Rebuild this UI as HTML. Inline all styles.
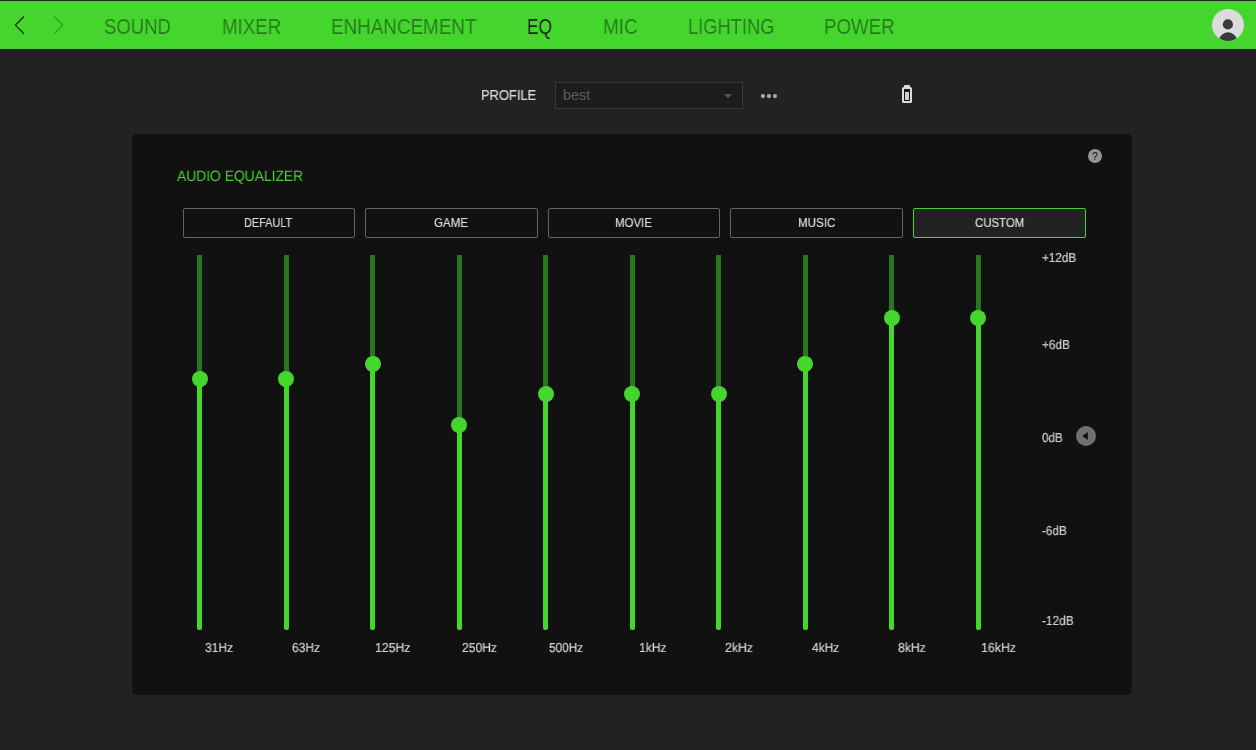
<!DOCTYPE html>
<html lang="en">
<head>
<meta charset="utf-8">
<title>Audio Equalizer</title>
<style>
html,body{margin:0;padding:0;}
body{width:1256px;height:750px;overflow:hidden;background:#222;position:relative;font-family:"Liberation Sans",sans-serif;}
.abs,.t,.trk,.fill,.thumb,.btn{position:absolute;}
.t{white-space:nowrap;line-height:1;transform-origin:0 84.65%;display:block;will-change:transform;}
#topline{left:0;top:0;width:1256px;height:1px;background:#222;}
#nav{left:0;top:1px;width:1256px;height:48px;background:#44d62c;}
#panel{left:132px;top:134px;width:1000px;height:561px;background:#111;border-radius:5px;}
.trk{top:255px;width:5px;height:375px;background:#2b7420;border-radius:0 0 2.5px 2.5px;}
.fill{width:5px;background:#44d62c;border-radius:0 0 2.5px 2.5px;}
.thumb{width:16px;height:16px;border-radius:50%;background:#44d62c;}
.btn{top:208px;width:172.5px;height:30px;box-sizing:border-box;border:1px solid #636363;border-radius:2px;background:#111;}
.btn.on{border-color:#44d62c;background:#222;}
#help{left:1088px;top:149px;width:14px;height:14px;border-radius:50%;background:#969696;color:#222;font-size:10px;line-height:16px;text-align:center;will-change:transform;overflow:hidden;-webkit-text-stroke:0.2px;}
#sel{left:555px;top:82px;width:188px;height:27px;box-sizing:border-box;border:1px solid #383838;background:#1c1c1c;}
</style>
</head>
<body>
<div class="abs" id="topline"></div>
<div class="abs" id="nav"></div>
<svg class="abs" style="left:0;top:0" width="90" height="50" viewBox="0 0 90 50">
  <polyline points="24,16.5 15.4,25.1 24,33.7" fill="none" stroke="#1f2a1c" stroke-width="1.25"/>
  <polyline points="54.1,16.5 62.7,25.1 54.1,33.7" fill="none" stroke="#2f9a22" stroke-width="1.1"/>
</svg>
<svg class="abs" style="left:1212px;top:9px" width="32" height="32" viewBox="0 0 32 32">
  <defs><clipPath id="avc"><circle cx="16" cy="16" r="16"/></clipPath></defs>
  <circle cx="16" cy="16" r="16" fill="#dcdcdc"/>
  <circle cx="15.9" cy="15.4" r="5.1" fill="#3a3a3a"/>
  <ellipse cx="16" cy="32.3" rx="9.2" ry="9" fill="#3a3a3a" clip-path="url(#avc)"/>
</svg>
<div class="abs" id="sel"></div>
<svg class="abs" style="left:720px;top:90px" width="16" height="12" viewBox="0 0 16 12">
  <polygon points="4,4 12,4 8,8.2" fill="#555"/>
</svg>
<svg class="abs" style="left:758px;top:90px" width="22" height="12" viewBox="0 0 22 12">
  <circle cx="4.9" cy="6.1" r="2.1" fill="#aaa"/><circle cx="10.9" cy="6.1" r="2.1" fill="#aaa"/><circle cx="17" cy="6.1" r="2.1" fill="#aaa"/>
</svg>
<svg class="abs" style="left:900px;top:83px" width="14" height="22" viewBox="0 0 14 22">
  <rect x="4" y="2" width="6" height="3" rx="0.8" fill="#dcdcdc"/>
  <rect x="3" y="5" width="8" height="14" rx="0.6" fill="#151515" stroke="#dcdcdc" stroke-width="2"/>
  <rect x="5" y="9" width="4" height="8" fill="#cfcfcf"/>
</svg>
<div class="abs" id="panel"></div>
<div class="abs" id="help">?</div>
<div class="btn" style="left:183px;width:172px"></div>
<div class="btn" style="left:365px;width:173px"></div>
<div class="btn" style="left:548px;width:172px"></div>
<div class="btn" style="left:730px;width:173px"></div>
<div class="btn on" style="left:913px;width:173px"></div>
<div class="trk" style="left:197px"></div>
<div class="fill" style="left:197px;top:379px;height:251px"></div>
<div class="thumb" style="left:192px;top:371px"></div>
<div class="trk" style="left:284px"></div>
<div class="fill" style="left:284px;top:379px;height:251px"></div>
<div class="thumb" style="left:278px;top:371px"></div>
<div class="trk" style="left:370px"></div>
<div class="fill" style="left:370px;top:364px;height:266px"></div>
<div class="thumb" style="left:365px;top:356px"></div>
<div class="trk" style="left:457px"></div>
<div class="fill" style="left:457px;top:425px;height:205px"></div>
<div class="thumb" style="left:451px;top:417px"></div>
<div class="trk" style="left:543px"></div>
<div class="fill" style="left:543px;top:394px;height:236px"></div>
<div class="thumb" style="left:538px;top:386px"></div>
<div class="trk" style="left:630px"></div>
<div class="fill" style="left:630px;top:394px;height:236px"></div>
<div class="thumb" style="left:624px;top:386px"></div>
<div class="trk" style="left:716px"></div>
<div class="fill" style="left:716px;top:394px;height:236px"></div>
<div class="thumb" style="left:711px;top:386px"></div>
<div class="trk" style="left:803px"></div>
<div class="fill" style="left:803px;top:364px;height:266px"></div>
<div class="thumb" style="left:797px;top:356px"></div>
<div class="trk" style="left:889px"></div>
<div class="fill" style="left:889px;top:318px;height:312px"></div>
<div class="thumb" style="left:884px;top:310px"></div>
<div class="trk" style="left:976px"></div>
<div class="fill" style="left:976px;top:318px;height:312px"></div>
<div class="thumb" style="left:970px;top:310px"></div>
<svg class="abs" style="left:1076px;top:426px" width="20" height="20" viewBox="0 0 20 20">
  <circle cx="10" cy="10" r="10" fill="#707070"/>
  <polygon points="6.2,10 11.8,6 11.8,14" fill="#111"/>
</svg>
<span class="t" style="left:103.73px;top:16.38px;font-size:22px;color:#2b7a20;transform:scale(0.8417,1);">SOUND</span>
<span class="t" style="left:221.87px;top:16.38px;font-size:22px;color:#2b7a20;transform:scale(0.8496,1);">MIXER</span>
<span class="t" style="left:331.44px;top:16.38px;font-size:22px;color:#2b7a20;transform:scale(0.8562,1);">ENHANCEMENT</span>
<span class="t" style="left:527.17px;top:16.38px;font-size:22px;color:#222;transform:scale(0.7842,1);">EQ</span>
<span class="t" style="left:603.25px;top:16.38px;font-size:22px;color:#2b7a20;transform:scale(0.8604,1);">MIC</span>
<span class="t" style="left:688.05px;top:16.38px;font-size:22px;color:#2b7a20;transform:scale(0.8315,1);">LIGHTING</span>
<span class="t" style="left:824.04px;top:16.38px;font-size:22px;color:#2b7a20;transform:scale(0.8502,1);">POWER</span>
<span class="t" style="left:481.48px;top:88.35px;font-size:14px;color:#dadada;transform:scale(0.9210,1);-webkit-text-stroke:0.2px;">PROFILE</span>
<span class="t" style="left:562.54px;top:88.35px;font-size:14px;color:#585858;transform:scale(1.0344,1);-webkit-text-stroke:0.2px;">best</span>
<span class="t" style="left:176.97px;top:169.30px;font-size:15px;color:#44d62c;transform:scale(0.9230,1);text-rendering:geometricPrecision;">AUDIO EQUALIZER</span>
<span class="t" style="left:205.20px;top:641.20px;font-size:13px;color:#d2d2d2;transform:scale(0.9272,1);text-rendering:geometricPrecision;-webkit-text-stroke:0.2px;">31Hz</span>
<span class="t" style="left:292.16px;top:641.20px;font-size:13px;color:#d2d2d2;transform:scale(0.9252,1);text-rendering:geometricPrecision;-webkit-text-stroke:0.2px;">63Hz</span>
<span class="t" style="left:375.23px;top:641.20px;font-size:13px;color:#d2d2d2;transform:scale(0.9422,1);text-rendering:geometricPrecision;-webkit-text-stroke:0.2px;">125Hz</span>
<span class="t" style="left:462.06px;top:641.20px;font-size:13px;color:#d2d2d2;transform:scale(0.9305,1);text-rendering:geometricPrecision;-webkit-text-stroke:0.2px;">250Hz</span>
<span class="t" style="left:548.85px;top:641.20px;font-size:13px;color:#d2d2d2;transform:scale(0.9074,1);text-rendering:geometricPrecision;-webkit-text-stroke:0.2px;">500Hz</span>
<span class="t" style="left:638.54px;top:641.20px;font-size:13px;color:#d2d2d2;transform:scale(0.9318,1);text-rendering:geometricPrecision;-webkit-text-stroke:0.2px;">1kHz</span>
<span class="t" style="left:725.18px;top:641.20px;font-size:13px;color:#d2d2d2;transform:scale(0.9470,1);text-rendering:geometricPrecision;-webkit-text-stroke:0.2px;">2kHz</span>
<span class="t" style="left:811.82px;top:641.20px;font-size:13px;color:#d2d2d2;transform:scale(0.9197,1);text-rendering:geometricPrecision;-webkit-text-stroke:0.2px;">4kHz</span>
<span class="t" style="left:898.30px;top:641.20px;font-size:13px;color:#d2d2d2;transform:scale(0.9393,1);text-rendering:geometricPrecision;-webkit-text-stroke:0.2px;">8kHz</span>
<span class="t" style="left:980.72px;top:641.20px;font-size:13px;color:#d2d2d2;transform:scale(0.9496,1);text-rendering:geometricPrecision;-webkit-text-stroke:0.2px;">16kHz</span>
<span class="t" style="left:1042.00px;top:251.00px;font-size:13px;color:#d2d2d2;transform:scale(0.9011,1);text-rendering:geometricPrecision;-webkit-text-stroke:0.2px;">+12dB</span>
<span class="t" style="left:1041.73px;top:338.00px;font-size:13px;color:#d2d2d2;transform:scale(0.9104,1);text-rendering:geometricPrecision;-webkit-text-stroke:0.2px;">+6dB</span>
<span class="t" style="left:1041.82px;top:431.00px;font-size:13px;color:#d2d2d2;transform:scale(0.8909,1);text-rendering:geometricPrecision;-webkit-text-stroke:0.2px;">0dB</span>
<span class="t" style="left:1041.84px;top:524.00px;font-size:13px;color:#d2d2d2;transform:scale(0.9025,1);text-rendering:geometricPrecision;-webkit-text-stroke:0.2px;">-6dB</span>
<span class="t" style="left:1041.82px;top:614.00px;font-size:13px;color:#d2d2d2;transform:scale(0.9152,1);text-rendering:geometricPrecision;-webkit-text-stroke:0.2px;">-12dB</span>
<span class="t" style="left:244.05px;top:216.10px;font-size:13px;color:#ddd;transform:scale(0.8368,1);-webkit-text-stroke:0.2px;">DEFAULT</span>
<span class="t" style="left:434.15px;top:216.10px;font-size:13px;color:#ddd;transform:scale(0.8921,1);-webkit-text-stroke:0.2px;">GAME</span>
<span class="t" style="left:615.23px;top:216.10px;font-size:13px;color:#ddd;transform:scale(0.8826,1);-webkit-text-stroke:0.2px;">MOVIE</span>
<span class="t" style="left:797.84px;top:216.10px;font-size:13px;color:#ddd;transform:scale(0.8923,1);-webkit-text-stroke:0.2px;">MUSIC</span>
<span class="t" style="left:974.62px;top:216.10px;font-size:13px;color:#ddd;transform:scale(0.8772,1);-webkit-text-stroke:0.2px;">CUSTOM</span>
</body>
</html>
